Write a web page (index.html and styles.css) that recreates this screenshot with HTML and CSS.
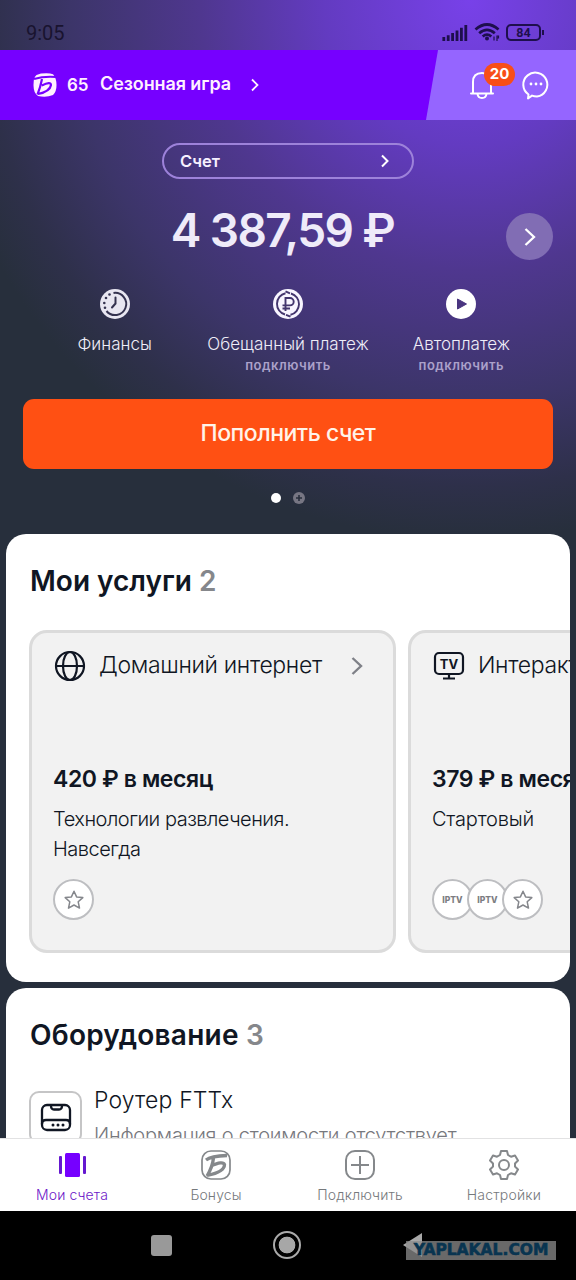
FILE: index.html
```html
<!DOCTYPE html>
<html lang="ru">
<head>
<meta charset="utf-8">
<title>Мои счета</title>
<link rel="stylesheet" href="styles.css">
</head>
<body>
<div class="app">
  <header class="status">
    <span class="clock">9:05</span>
    <div class="status-icons">
      <svg class="signal" width="26" height="18" viewBox="0 0 26 18" fill="none" stroke="#1e0f4d" stroke-width="2.800"><path d="M1.800 13v4M6.200 11.200V17M10.600 9v8M15 6.500V17M19.400 3.700V17M23.800 1v16"/></svg>
      <svg width="26" height="20" viewBox="0 0 26 20" fill="none" stroke="#1e0f4d" stroke-width="2.800"><path d="M1.500 7.500Q13-2.500 24.500 7.500M5.200 11.200Q13 4.500 20.800 11.200M8.700 14.500Q13 10.800 17.300 14.500"/><circle cx="13" cy="16.500" r="2" fill="#1e0f4d" stroke="none"/><path d="M20 14.500v4M23 19v-5h1.500v2H23" stroke-width="1.200"/></svg>
      <span class="battery">84</span>
    </div>
  </header>

  <div class="promo">
    <div class="season">
      <svg width="24" height="24" viewBox="0 0 24 24"><path d="M8 .5Q16-.5 20 1.200Q23.500 5 23.500 12Q23.500 19 20 22Q13 25 5 23Q.5 20 .5 12Q.5 4 3.500 2Z" fill="#fff0ff"/><path d="M1 6Q11 3 23 4M9 6Q7.500 14 4.500 21.500M8.800 12.500Q18 8 18 12Q17 18.500 5 21" fill="none" stroke="#7600ff" stroke-width="2.200"/></svg>
      <b class="points">65</b>
      <b class="game">Сезонная игра</b>
      <svg width="10" height="14" viewBox="0 0 10 14" fill="none" stroke="#fff0ff" stroke-width="1.800"><path d="M2 1.500 7.500 7 2 12.500"/></svg>
    </div>
    <div class="alerts">
      <div class="bell">
        <svg width="26" height="30" viewBox="0 0 26 30" fill="none" stroke="#fff" stroke-width="2" stroke-linecap="round"><path d="M2 23.500h22M4 23V12Q4 3 13 3T22 12V23M8.500 24Q9 28 13 28T17.500 24"/></svg>
        <b class="badge">20</b>
      </div>
      <svg width="28" height="30" viewBox="0 0 28 30"><path d="M6.500 24.500A12 12 0 1 1 15 26.500Q12 26.500 10 25.600L6 28.500Z" fill="none" stroke="#fff" stroke-width="2" stroke-linejoin="round"/><g fill="#fff"><circle cx="9" cy="14" r="1.400"/><circle cx="14" cy="14" r="1.400"/><circle cx="19" cy="14" r="1.400"/></g></svg>
    </div>
  </div>

  <section class="account">
    <div class="picker">
      <b>Счет</b>
      <svg width="10" height="14" viewBox="0 0 10 14" fill="none" stroke="#fff" stroke-width="2"><path d="M2 1.500 7.500 7 2 12.500"/></svg>
    </div>
    <div class="balance-row">
      <span></span>
      <strong class="balance">4 387,59 ₽</strong>
      <span class="next"><svg width="12" height="20" viewBox="0 0 12 20" fill="none" stroke="#fff" stroke-width="2.300"><path d="M1.500 2 10 10 1.500 18"/></svg></span>
    </div>
    <div class="actions">
      <div class="action">
        <svg width="30" height="30" viewBox="0 0 30 30"><circle cx="15" cy="15" r="15" fill="#e8e6f1"/><g fill="none" stroke="#34324f" stroke-width="2"><path d="M13.500 4A11.100 11.100 0 1 1 6.500 22"/><path d="M15.500 8.500v6L12 18.500" stroke-linecap="round"/></g><g fill="#34324f"><circle cx="9.500" cy="5.500" r="1.300"/><circle cx="6" cy="9" r="1.300"/><circle cx="4.300" cy="14" r="1.300"/><circle cx="5" cy="18.800" r="1.300"/></g></svg>
        <span class="action-name">Финансы</span>
      </div>
      <div class="action">
        <svg width="30" height="30" viewBox="0 0 30 30"><circle cx="15" cy="15" r="15" fill="#f8f5ff"/><g fill="none" stroke="#43356d" stroke-width="1.900"><path d="M12.500 4.200A11 11 0 0 0 12 25.500M17.500 25.800A11 11 0 0 0 18 4.500M12.500 2.300 17 4.300M17.500 27.700 13 25.800"/><path d="M12.500 22V9H17a3.700 3.700 0 0 1 0 7.400H9.500M9.500 19.500H17"/></g></svg>
        <span class="action-name">Обещанный платеж</span>
        <b class="action-note">подключить</b>
      </div>
      <div class="action">
        <svg width="30" height="30" viewBox="0 0 30 30"><circle cx="15" cy="15" r="15" fill="#fff"/><path d="M11.500 10v10L20.500 15Z" fill="#4a3580" stroke="#4a3580" stroke-linejoin="round"/></svg>
        <span class="action-name">Автоплатеж</span>
        <b class="action-note">подключить</b>
      </div>
    </div>
    <div class="topup">Пополнить счет</div>
    <div class="pages">
      <i class="dot"></i>
      <svg width="12" height="12" viewBox="0 0 12 12"><circle cx="6" cy="6" r="6" fill="#777683"/><path d="M6 3v6M3 6h6" stroke="#282f3d" stroke-width="1.600"/></svg>
    </div>
  </section>

  <section class="sheet services">
    <h2>Мои услуги <span>2</span></h2>
    <div class="cards">
      <article class="card">
        <div class="card-head">
          <svg width="32" height="32" viewBox="0 0 32 32" fill="none" stroke="#101623" stroke-width="2.200"><circle cx="16" cy="16" r="14"/><ellipse cx="16" cy="16" rx="7" ry="14"/><path d="M2 16h28"/></svg>
          <span class="card-title">Домашний интернет</span>
          <svg width="12" height="20" viewBox="0 0 12 20" fill="none" stroke="#7f8188" stroke-width="2.400"><path d="M1.500 2 10 10 1.500 18"/></svg>
        </div>
        <b class="price">420 ₽ в месяц</b>
        <p class="plan">Технологии развлечения.<br>Навсегда</p>
        <div class="perks">
          <span class="perk"><svg width="20" height="20" viewBox="0 0 20 20" fill="none" stroke="#85878c" stroke-width="1.500" stroke-linejoin="round"><path d="m10 1.200 2.600 5.700 6.200.7-4.600 4.200 1.300 6.300L10 15l-5.500 3.100 1.300-6.300L1.200 7.600l6.200-.7Z"/></svg></span>
        </div>
      </article>
      <article class="card">
        <div class="card-head">
          <svg class="tv" width="32" height="32" viewBox="0 0 32 32" fill="none" stroke="#101623" stroke-width="2.200"><rect x="2" y="3" width="28" height="21" rx="4"/><path d="M16 24v4M10 28.500h12"/><text x="16" y="18.500" text-anchor="middle">TV</text></svg>
          <span class="card-title">Интеракт</span>
        </div>
        <b class="price">379 ₽ в меся</b>
        <p class="plan start">Стартовый</p>
        <div class="perks">
          <span class="perk">IPTV</span>
          <span class="perk">IPTV</span>
          <span class="perk"><svg width="20" height="20" viewBox="0 0 20 20" fill="none" stroke="#85878c" stroke-width="1.500" stroke-linejoin="round"><path d="m10 1.200 2.600 5.700 6.200.7-4.600 4.200 1.300 6.300L10 15l-5.500 3.100 1.300-6.300L1.200 7.600l6.200-.7Z"/></svg></span>
        </div>
      </article>
    </div>
  </section>

  <section class="sheet equipment">
    <h2 class="equipment-title">Оборудование <span>3</span></h2>
    <div class="device">
      <div class="device-icon"><svg width="32" height="30" viewBox="0 0 32 30" fill="none" stroke="#101623" stroke-width="2.300"><rect x="2" y="2" width="28" height="25" rx="5"/><path d="M2 21q0-4 4-4h20q4 0 4 4M11 2.500q0 4 3 4h5q3 0 3-4"/><g fill="#101623" stroke="none"><circle cx="13" cy="22" r="1.500"/><circle cx="18" cy="22" r="1.500"/><circle cx="23" cy="22" r="1.500"/></g></svg></div>
      <div class="device-text">
        <span class="device-name">Роутер FTTx</span>
        <span class="device-note">Информация о стоимости отсутствует</span>
      </div>
    </div>
  </section>

  <nav class="tabs">
    <div class="tab active">
      <svg width="30" height="30" viewBox="0 0 30 30" fill="#7600ff"><rect x="8" y="3" width="15" height="24" rx="1.500"/><rect x="2" y="6" width="3" height="18" rx="1" fill="#6518d0"/><rect x="26" y="6" width="3" height="18" rx="1" fill="#6518d0"/></svg>
      <span>Мои счета</span>
    </div>
    <div class="tab">
      <svg width="30" height="30" viewBox="0 0 30 30" fill="none" stroke="#85888b"><rect x="1" y="1" width="28" height="28" rx="9" stroke-width="1.700"/><path d="M5 10Q10 6 26 5.500M12.500 8Q11.500 17 6 26M10 16Q22 10.500 23.500 14.500Q23.500 22 6 25.500" stroke-width="3.300"/></svg>
      <span>Бонусы</span>
    </div>
    <div class="tab">
      <svg width="30" height="30" viewBox="0 0 30 30" fill="none" stroke="#85888b" stroke-width="2"><rect x="1" y="1" width="28" height="28" rx="9"/><path d="M15 6v18M6 15h18"/></svg>
      <span>Подключить</span>
    </div>
    <div class="tab">
      <svg width="30" height="30" viewBox="0 0 30 30" fill="none" stroke="#85888b" stroke-width="2" stroke-linejoin="round"><path d="M12 1h6l1 4 3 1.700 4-1.200 3 5-3 3v3l3 3-3 5-4-1.200L19 25l-1 4h-6l-1-4-3-1.700-4 1.200-3-5 3-3v-3l-3-3 3-5 4 1.200L11 5Z"/><circle cx="15" cy="15" r="5"/></svg>
      <span class="settings">Настройки</span>
    </div>
  </nav>

  <footer class="system">
    <i class="recent"></i>
    <i class="home"></i>
    <svg class="back" width="20" height="24" viewBox="0 0 20 24"><path d="M0 12 19 0v24Z" fill="#a8a8a8"/></svg>
    <span class="stamp">YAPLAKAL.COM</span>
  </footer>
</div>
</body>
</html>
```

FILE: styles.css
```css
* { box-sizing: border-box; }
body { margin: 0; font-family: Inter, "Noto Sans", sans-serif; color: #101623; }
svg { display: block; flex: none; }
.app {
  width: 576px; height: 1280px; overflow: hidden;
  display: flex; flex-direction: column;
  background: radial-gradient(circle 540px at 470px 0, #7841e9 0%, #633bc1 27%, #4f378f 50%, #3c3569 74%, #2e304a 90%, #272f3c 100%);
}
.status { height: 50px; flex: none; display: flex; justify-content: space-between; padding: 22px 35px 0 26px; color: #19132f; }
.clock { font: 20px/23px Roboto, sans-serif; }
.status-icons { display: flex; align-items: flex-start; gap: 6px; }
.signal { margin-top: 2px; }
.battery {
  width: 35px; height: 17px; margin-top: 2px; border: 2px solid #1e0f4d; border-radius: 5px; position: relative;
  font: 700 12.500px/13px Roboto, sans-serif; text-align: center; color: #1e0f4d;
}
.battery::after { content: ""; position: absolute; right: -5px; top: 4px; width: 2px; height: 5px; background: #1e0f4d; }
.promo { height: 70px; flex: none; display: flex; background: #9565ff; }
.season {
  width: 438px; background: #7600ff; color: #fff0ff; padding-left: 33px;
  display: flex; align-items: center;
  clip-path: polygon(0 0, 100% 0, 426px 100%, 0 100%);
}
.points { margin-left: 10px; width: 33px; font-size: 17px; font-weight: 600; }
.game { width: 150px; font-size: 18px; line-height: 24px; margin-top: -2px; font-weight: 600; letter-spacing: -.1px; white-space: nowrap; }
.alerts { display: flex; align-items: center; padding-left: 31px; gap: 27px; }
.bell { position: relative; }
.badge {
  position: absolute; left: 15px; top: -7px; width: 31px; height: 23px; border-radius: 12px;
  background: #f84e18; color: #fff; font-size: 15px; line-height: 22px; text-align: center;
}
.account { height: 414px; flex: none; padding: 23px 23px 0; display: flex; flex-direction: column; align-items: center; }
.picker {
  width: 252px; height: 36px; border: 2px solid #9d82da; border-radius: 18px; padding: 0 22px 0 16px;
  display: flex; align-items: center; justify-content: space-between; color: #f6f0ff; font-size: 16.500px;
}
.picker b { font-weight: 600; }
.balance-row { align-self: stretch; margin-top: 21px; height: 72px; display: grid; grid-template-columns: 47px 1fr 47px; }
.balance { font-size: 46px; line-height: 60px; font-weight: 600; letter-spacing: -1.600px; text-align: center; color: #efebf9; white-space: nowrap; margin-right: 11px; }
.next { width: 47px; height: 47px; margin-top: 13px; border-radius: 50%; background: #816db4; display: flex; align-items: center; justify-content: center; }
.actions { align-self: stretch; margin: 17px 5px 0; display: grid; grid-template-columns: repeat(3, 1fr); height: 110px; }
.action { display: flex; flex-direction: column; align-items: center; white-space: nowrap; }
.action-name { margin-top: 13px; font-size: 17px; line-height: 24px; color: #efedf8; font-weight: 300; }
.action-note { font-size: 13px; line-height: 18px; color: #aba1ca; font-weight: 600; letter-spacing: .5px; }
.topup {
  align-self: stretch; height: 70px; border-radius: 11px; background: #ff5013; color: #fff3e9;
  font-size: 23px; line-height: 68px; text-align: center; font-weight: 450; letter-spacing: -.5px;
}
.pages { margin-top: 23px; display: flex; align-items: center; gap: 12px; }
.dot { width: 10px; height: 10px; border-radius: 50%; background: #fff; }
.sheet { width: 564px; margin-left: 6px; background: #fff; border-radius: 20px; overflow: hidden; flex: none; }
.services { height: 448px; margin-bottom: 6px; }
h2 { margin: 0; padding: 27px 0 0 24px; height: 96px; font-size: 28px; line-height: 40px; font-weight: 600; white-space: nowrap; }
h2 span { color: #85878b; }
.cards { margin-left: 23px; display: flex; gap: 12px; }
.card { width: 367px; height: 323px; flex: none; border: 3px solid #dbdbdb; border-radius: 18px; background: #f2f2f2; padding: 17px 21px; }
.card-head { display: flex; align-items: center; height: 32px; padding-left: 1px; }
.card-title { margin-left: 13px; margin-top: -2px; width: 252px; font-size: 23px; font-weight: 300; letter-spacing: -.35px; white-space: nowrap; }
.tv text { font: 700 13px Inter, sans-serif; fill: #101623; stroke: none; }
.price { display: block; margin-top: 80px; font-size: 23px; line-height: 34px; font-weight: 600; letter-spacing: -.4px; white-space: nowrap; }
.plan { margin: 9px 0 0; height: 74px; font-size: 20px; line-height: 29.500px; font-weight: 300; letter-spacing: -.5px; }
.start { letter-spacing: -.2px; }
.perks { display: flex; }
.perk {
  width: 41px; height: 41px; border: 2px solid #bdbec1; border-radius: 50%; background: #fff; color: #7c7d82;
  display: flex; align-items: center; justify-content: center; font-size: 8.500px; font-weight: 800;
}
.perk + .perk { margin-left: -6px; }
.equipment { height: 150px; border-radius: 20px 20px 0 0; }
.equipment .equipment-title { height: 103px; letter-spacing: .22px; }
.device { display: flex; padding-left: 23px; }
.device-icon { width: 53px; height: 53px; flex: none; border: 2px solid #c5c5c6; border-radius: 10px; display: flex; align-items: center; justify-content: center; }
.device-text { margin-left: 12px; margin-top: -6px; display: flex; flex-direction: column; white-space: nowrap; font-weight: 300; }
.device-name { font-size: 23px; line-height: 30px; letter-spacing: .15px; }
.device-note { margin-top: 5px; font-size: 20px; line-height: 30px; color: #77787d; letter-spacing: -.2px; }
.tabs { height: 73px; flex: none; background: #fff; border-top: 1px solid #e2e2e3; display: grid; grid-template-columns: repeat(4, 1fr); }
.tab { display: flex; flex-direction: column; align-items: center; padding-top: 11px; color: #76797c; font-size: 14px; line-height: 20px; }
.tab span { margin-top: 5px; font-weight: 300; letter-spacing: .1px; }
.tab .settings { letter-spacing: .2px; }
.tab.active { color: #6d18c8; }
.system { flex: 1; background: #000; position: relative; display: flex; align-items: flex-start; }
.recent { width: 21px; height: 21px; margin: 24px 0 0 151px; border-radius: 3px; background: #999; }
.home { width: 28px; height: 28px; margin: 20px 0 0 101px; border: 2.500px solid #aaa; border-radius: 50%; background: radial-gradient(circle, #a7a7a7 0 8px, #000 8.700px); }
.back { margin: 22px 0 0 102px; }
.stamp {
  position: absolute; left: 406px; top: 30px; width: 150px; height: 19px; background: rgba(140, 140, 140, .75); color: #083450;
  font: 700 15.500px/19px "DejaVu Sans", sans-serif; text-align: center; -webkit-text-stroke: .6px #083450;
}
```
